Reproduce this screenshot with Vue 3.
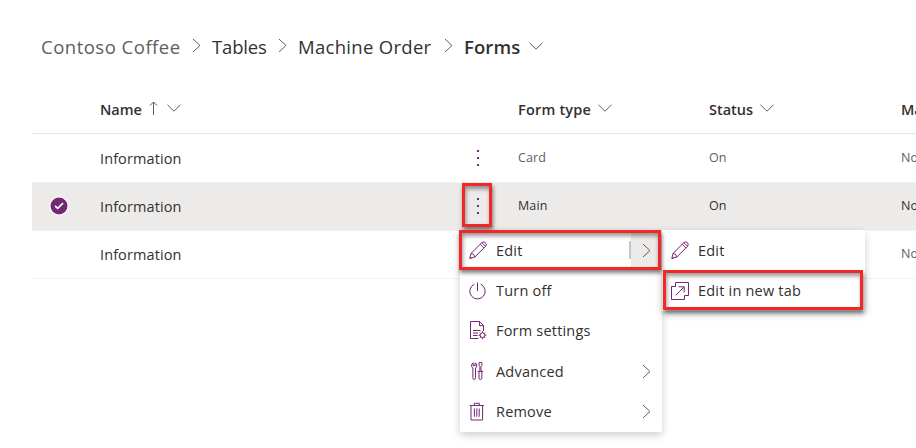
<script setup>
const rows = [
  { name: 'Information', type: 'Card', status: 'On', managed: 'No', selected: false },
  { name: 'Information', type: 'Main', status: 'On', managed: 'No', selected: true },
  { name: 'Information', type: '', status: '', managed: 'No', selected: false },
]
const menu = [
  { key: 'edit', label: 'Edit', sub: true, split: true },
  { key: 'power', label: 'Turn off' },
  { key: 'form', label: 'Form settings' },
  { key: 'tools', label: 'Advanced', sub: true },
  { key: 'trash', label: 'Remove', sub: true },
]
const submenu = [
  { key: 'edit', label: 'Edit' },
  { key: 'open', label: 'Edit in new tab' },
]
const icons = {
  edit: ['M.8 17.4 2.1 12.4 12.8 1.6Q14.6 0 16.4 1.7Q18.1 3.5 16.5 5.3L5.8 16.1Z', 'M2.1 12.4Q5.3 12.6 5.8 16.1M11.2 3.2 14.9 6.9M12.8 1.6 16.5 5.3M.8 17.4 2.8 16.8'],
  power: ['M8.5 .5V9.2', 'M5.4 2.2A7.7 7.7 0 1 0 11.6 2.2'],
  form: ['M9.5 16.5H1.5V-.5H10.5L14.5 3.5V9M10.5 -.5V3.7H14.5', 'M4 8.5H11.5M4 11H9M4 13.5H8.5', 'M13.5 9.3V10.8M13.5 15.6V17.1M9.6 13.2H11.1M15.9 13.2H17.4M10.8 10.5 11.8 11.5M15.2 14.9 16.2 15.9M16.2 10.5 15.2 11.5M11.8 14.9 10.8 15.9', 'M13.5 10.8A2.4 2.4 0 1 0 13.5 15.6A2.4 2.4 0 1 0 13.5 10.8'],
  tools: ['M4.2 .8V3.6H6.2V.8Q8 1.9 7.8 4Q7.5 5.4 6.5 6V15.8Q6.5 17.5 5.2 17.5Q3.9 17.5 3.9 15.8V6Q2.7 5.4 2.6 4Q2.4 1.8 4.2 .8Z', 'M10 .6H12.9V3.2L12 4.6V9M10.9 9V4.6L10 3.2V.6M8.6 9.4H14.2M10 9.4V16.2Q10 17.5 11.4 17.5Q12.8 17.5 12.8 16.2V9.4'],
  trash: ['M.7 2.5H14.9M5.3 2.3V.3H10.3V2.3M2 2.5V17H13.6V2.5', 'M5.4 5.5V13.8M7.8 5.5V13.8M10.2 5.5V13.8'],
  open: ['M4.5 4.5H.5V17.5H13.5V13.5', 'M4.5 .5H17.5V13.5H13.5M4.5 .5V4.5M4.8 13.2 12.9 5.1M7.5 4.8H13.2V10.5'],
}
</script>

<template>
  <main class="page">
    <nav class="crumbs">
      <span class="crumb root">Contoso Coffee</span>
      <svg class="sep" viewBox="0 0 9 15"><path d="M1 1 8 7.5 1 14" /></svg>
      <span class="crumb tables">Tables</span>
      <svg class="sep" viewBox="0 0 9 15"><path d="M1 1 8 7.5 1 14" /></svg>
      <span class="crumb machine">Machine Order</span>
      <svg class="sep" viewBox="0 0 9 15"><path d="M1 1 8 7.5 1 14" /></svg>
      <span class="crumb current">Forms</span>
      <svg class="down" viewBox="0 0 14 8"><path d="M.5 .8 7 7.2 13.5 .8" /></svg>
    </nav>

    <section class="table">
      <div class="row head">
        <span></span>
        <span class="cell"><b class="h-name">Name</b>
          <svg class="up" viewBox="0 0 9 15"><path d="M4.5 14V1M1 4.5 4.5 1 8 4.5" /></svg>
          <svg class="down" viewBox="0 0 14 8"><path d="M.5 .8 7 7.2 13.5 .8" /></svg>
        </span>
        <span></span>
        <span class="cell"><b class="h-type">Form type</b><svg class="down" viewBox="0 0 14 8"><path d="M.5 .8 7 7.2 13.5 .8" /></svg></span>
        <span class="cell"><b class="h-status">Status</b><svg class="down" viewBox="0 0 14 8"><path d="M.5 .8 7 7.2 13.5 .8" /></svg></span>
        <span class="cell"><b>Ma</b></span>
      </div>
      <div v-for="(r, i) in rows" :key="i" class="row" :class="{ selected: r.selected }">
        <span class="check">
          <svg v-if="r.selected" viewBox="0 0 20 20"><circle cx="10" cy="10" r="9.7" fill="#fff" /><circle cx="10" cy="10" r="8.5" fill="#742774" /><path d="M6 9.8 8.7 12.3 14 7.2" /></svg>
        </span>
        <span class="name">{{ r.name }}</span>
        <span class="dots"><i></i><i></i><i></i></span>
        <span class="small">{{ r.type }}</span>
        <span class="small">{{ r.status }}</span>
        <span class="small">{{ r.managed }}</span>
      </div>
    </section>

    <ul class="menu primary">
      <li v-for="m in menu" :key="m.key" :class="{ split: m.split }">
        <svg class="icon" viewBox="0 0 18 18"><path v-for="d in icons[m.key]" :key="d" :d="d" /></svg>
        <span class="label" :class="m.key">{{ m.label }}</span>
        <span v-if="m.split" class="divider"></span>
        <span v-if="m.sub" class="more"><svg viewBox="0 0 9 15"><path d="M1 1 8 7.5 1 14" /></svg></span>
      </li>
    </ul>
    <ul class="menu secondary">
      <li v-for="m in submenu" :key="m.key">
        <svg class="icon" viewBox="0 0 18 18"><path v-for="d in icons[m.key]" :key="d" :d="d" /></svg>
        <span class="label" :class="m.key">{{ m.label }}</span>
      </li>
    </ul>

    <div class="mark mark-dots"></div>
    <div class="mark mark-edit"></div>
    <div class="mark mark-tab"></div>
  </main>
</template>

<style>
body { margin: 0; background: #fff; overflow: hidden; }
</style>

<style scoped>
.page {
  position: relative;
  width: 916px;
  height: 448px;
  overflow: hidden;
  background: #fff;
  color: #323130;
  font-family: "Open Sans", "Noto Sans", sans-serif;
  font-size: 14.5px;
}
svg { display: block; flex: none; overflow: visible; }
path { fill: none; stroke: #605e5c; stroke-width: 1; }
.crumbs { display: flex; align-items: center; height: 84px; padding-left: 41px; padding-top: 9px; box-sizing: border-box; font-size: 18.5px; white-space: nowrap; }
.crumb { flex: none; }
.root { color: #605e5c; width: 139px; letter-spacing: .5px; }
.tables { width: 54px; letter-spacing: -.15px; }
.machine { width: 134px; letter-spacing: .3px; }
.current { width: 56px; font-weight: 600; letter-spacing: .1px; }
.sep { width: 9px; height: 15px; margin: 0 11.5px; }
.down { width: 14px; height: 8px; }
.crumbs .sep, .crumbs .down { margin-bottom: 2px; }
.crumbs .down { margin-left: 9px; }
.row {
  display: grid;
  grid-template-columns: 68px 363px 55px 191px 192px 100px;
  align-items: center;
  box-sizing: border-box;
  height: 48px;
  margin-left: 32px;
  white-space: nowrap;
}
.row + .row + .row { border-top: 1px solid #f3f2f1; }
.row:last-child { height: 49px; border-bottom: 1px solid #f3f2f1; }
.row.head { height: 50px; border-bottom: 1px solid #e8e6e5; }
.selected { background: #edebe9; }
.cell { display: flex; align-items: center; }
.cell b { font-weight: 600; padding-top: 2px; }
.cell .up { width: 9px; height: 15px; margin: 0 9px 0 7px; }
.cell .down { margin-bottom: 1px; }
.h-name { width: 42px; }
.h-type { width: 73px; margin-right: 7px; letter-spacing: .2px; }
.h-status { width: 44px; margin-right: 7px; }
.check svg { width: 20px; height: 20px; margin: -1px 0 0 17px; }
.check path { stroke: #fff; stroke-width: 1.7; }
.name { letter-spacing: .1px; }
.small { font-size: 12.5px; color: #605e5c; padding-bottom: 2px; letter-spacing: .12px; }
.selected .small { color: #323130; }
.dots { display: flex; flex-direction: column; gap: 5px; padding-left: 13.5px; }
.dots i { width: 2px; height: 2px; background: #742774; }
.selected .dots { padding-bottom: 1px; }
.menu { position: absolute; top: 230px; margin: 0; padding: 0; list-style: none; background: #fff; box-shadow: 0 3px 8px rgba(0, 0, 0, .2); box-sizing: border-box; }
.primary { left: 460px; width: 202px; height: 202px; }
.secondary { left: 662px; width: 203px; height: 81px; }
li { display: flex; align-items: center; height: 40.4px; padding-left: 9px; white-space: nowrap; }
.icon { width: 18px; height: 18px; margin-right: 9px; }
.icon path { stroke: #742774; }
.label { flex: 1; letter-spacing: .2px; }
.more { display: flex; align-items: center; justify-content: center; width: 31px; height: 40px; }
.more svg { width: 9px; height: 15px; }
.split .more { background: #edebe9; }
.divider { width: 2px; height: 18px; background: #c8c6c4; }
.mark { position: absolute; box-sizing: border-box; border: 3px solid #f22727; box-shadow: 1px 3px 4px rgba(0, 0, 0, .5), inset 1px 3px 4px rgba(0, 0, 0, .4); }
.mark-dots { left: 462px; top: 183px; width: 30px; height: 44px; }
.mark-edit { left: 459px; top: 230px; width: 202px; height: 40px; }
.mark-tab { left: 663px; top: 270px; width: 200px; height: 40px; }
</style>
